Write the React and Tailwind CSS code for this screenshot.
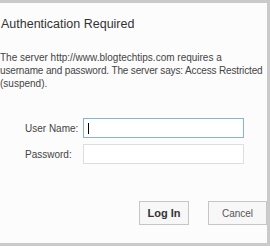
import React from 'react';

const App = () => {
  return (
    <div className="w-[270px] h-[250px] bg-white overflow-hidden" style={{ fontFamily: '"Liberation Sans", Arial, sans-serif' }}>
      <div className="w-[270px] h-[246px] bg-[#fcfcfc] border-t-[3px] border-r-[3px] border-b-[3px] border-[#cacaca] text-[#444]">
        <h1 className="pl-[1px] pt-[12px] text-[12.5px] leading-[18px] text-[#333]">Authentication Required</h1>

        <p className="mt-[18px] text-[10px] leading-[13px] whitespace-nowrap">
          The server http://www.blogtechtips.com requires a<br />
          <span className="tracking-[-0.15px]">username and password. The server says: Access Restricted</span><br />
          (suspend).
        </p>

        <div className="mt-[28px] flex flex-col gap-[6px]">
          <div className="flex items-center">
            <label className="ml-[25px] w-[58px] text-[10px]">User Name:</label>
            <div className="w-[161px] h-[20px] border border-[#86b3da] bg-white flex items-center pl-[4px]">
              <span className="w-px h-[11px] bg-black"></span>
            </div>
          </div>
          <div className="flex items-center">
            <label className="ml-[25px] w-[58px] text-[10px]">Password:</label>
            <div className="w-[161px] h-[20px] border border-[#dedede] bg-white"></div>
          </div>
        </div>

        <div className="mt-[37px] flex justify-end gap-[19px]">
          <button className="w-[50px] h-[24px] border border-[#c6c6c6] bg-[#f7f7f7] text-[11px] font-bold text-[#333]">Log In</button>
          <button className="w-[59px] h-[24px] border border-[#c6c6c6] bg-[#f7f7f7] text-[10px] text-[#555]">Cancel</button>
        </div>
      </div>
    </div>
  );
};

export default App;
